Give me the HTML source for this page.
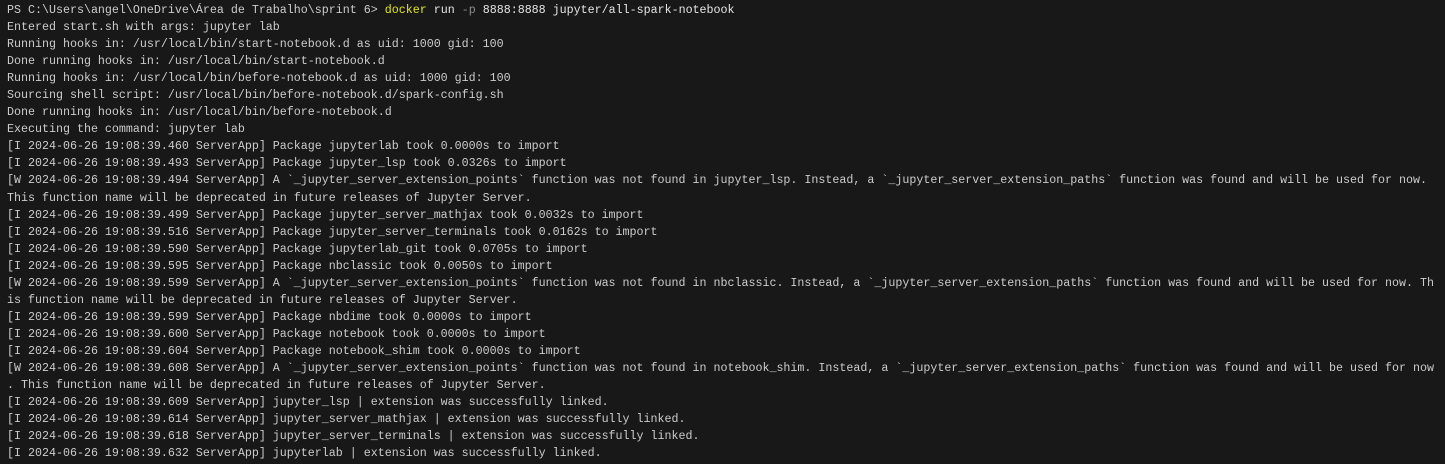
<!DOCTYPE html>
<html><head><meta charset="utf-8"><style>
html,body{margin:0;padding:0;background:#181818;width:1445px;height:464px;overflow:hidden}
pre{margin:0;padding:2px 0 0 7px;font-family:"Liberation Mono",monospace;font-size:11.67px;line-height:17.04px;color:#cccccc;white-space:pre}
.y{color:#e5e510}.g{color:#8c8c8c}.w{color:#e5e5e5}
</style></head><body><pre>PS C:\Users\angel\OneDrive\Área de Trabalho\sprint 6&gt; <span class="y">docker</span> <span class="w">run</span> <span class="g">-p</span> <span class="w">8888:8888 jupyter/all-spark-notebook</span>
Entered start.sh with args: jupyter lab
Running hooks in: /usr/local/bin/start-notebook.d as uid: 1000 gid: 100
Done running hooks in: /usr/local/bin/start-notebook.d
Running hooks in: /usr/local/bin/before-notebook.d as uid: 1000 gid: 100
Sourcing shell script: /usr/local/bin/before-notebook.d/spark-config.sh
Done running hooks in: /usr/local/bin/before-notebook.d
Executing the command: jupyter lab
[I 2024-06-26 19:08:39.460 ServerApp] Package jupyterlab took 0.0000s to import
[I 2024-06-26 19:08:39.493 ServerApp] Package jupyter_lsp took 0.0326s to import
[W 2024-06-26 19:08:39.494 ServerApp] A `_jupyter_server_extension_points` function was not found in jupyter_lsp. Instead, a `_jupyter_server_extension_paths` function was found and will be used for now.
This function name will be deprecated in future releases of Jupyter Server.
[I 2024-06-26 19:08:39.499 ServerApp] Package jupyter_server_mathjax took 0.0032s to import
[I 2024-06-26 19:08:39.516 ServerApp] Package jupyter_server_terminals took 0.0162s to import
[I 2024-06-26 19:08:39.590 ServerApp] Package jupyterlab_git took 0.0705s to import
[I 2024-06-26 19:08:39.595 ServerApp] Package nbclassic took 0.0050s to import
[W 2024-06-26 19:08:39.599 ServerApp] A `_jupyter_server_extension_points` function was not found in nbclassic. Instead, a `_jupyter_server_extension_paths` function was found and will be used for now. Th
is function name will be deprecated in future releases of Jupyter Server.
[I 2024-06-26 19:08:39.599 ServerApp] Package nbdime took 0.0000s to import
[I 2024-06-26 19:08:39.600 ServerApp] Package notebook took 0.0000s to import
[I 2024-06-26 19:08:39.604 ServerApp] Package notebook_shim took 0.0000s to import
[W 2024-06-26 19:08:39.608 ServerApp] A `_jupyter_server_extension_points` function was not found in notebook_shim. Instead, a `_jupyter_server_extension_paths` function was found and will be used for now
. This function name will be deprecated in future releases of Jupyter Server.
[I 2024-06-26 19:08:39.609 ServerApp] jupyter_lsp | extension was successfully linked.
[I 2024-06-26 19:08:39.614 ServerApp] jupyter_server_mathjax | extension was successfully linked.
[I 2024-06-26 19:08:39.618 ServerApp] jupyter_server_terminals | extension was successfully linked.
[I 2024-06-26 19:08:39.632 ServerApp] jupyterlab | extension was successfully linked.</pre></body></html>
